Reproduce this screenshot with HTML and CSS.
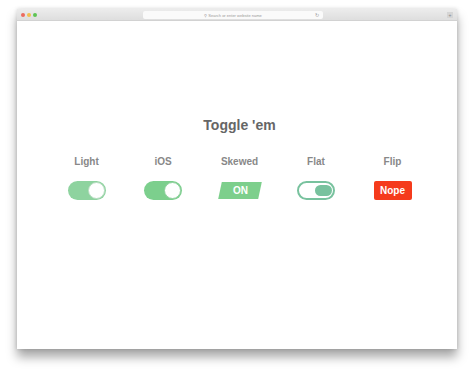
FILE: index.html
```html
<!DOCTYPE html>
<html lang="en">
<head>
<meta charset="utf-8">
<title>Toggle 'em</title>
<link rel="stylesheet" href="styles.css">
</head>
<body>
<div class="window">
	<div class="toolbar">
		<div class="dots">
			<span class="dot red"></span>
			<span class="dot yellow"></span>
			<span class="dot green"></span>
		</div>
		<div class="address">
			<span class="search">&#9906; Search or enter website name</span>
			<span class="reload">&#8635;</span>
		</div>
		<span class="plus">+</span>
	</div>
	<div class="page">
		<h1 class="title">Toggle 'em</h1>
		<ul class="toggles">
			<li>
				<span class="label">Light</span>
				<span class="tgl tgl_light"><i></i></span>
			</li>
			<li>
				<span class="label">iOS</span>
				<span class="tgl tgl_ios"><i></i></span>
			</li>
			<li>
				<span class="label">Skewed</span>
				<span class="tgl tgl_skew"><b>ON</b></span>
			</li>
			<li>
				<span class="label">Flat</span>
				<span class="tgl tgl_flat"><i></i></span>
			</li>
			<li>
				<span class="label">Flip</span>
				<span class="tgl tgl_flip">Nope</span>
			</li>
		</ul>
	</div>
</div>
</body>
</html>
```
FILE: styles.css
```css
* {margin:0; padding:0; box-sizing:border-box}
li {list-style:none}
html, body {height:100%}
body {
	background:#fff;
	font-family:"Liberation Sans", Arial, sans-serif;
	padding:9px 17px 0 17px;
}

.window {
	width:440px;
	height:340px;
	background:#fff;
	box-shadow:0 8px 10px rgba(0,0,0,0.35), 0 0 4px rgba(0,0,0,0.15);
	display:flex;
	flex-direction:column;
}
.toolbar {
	height:12px;
	background:linear-gradient(#ececec, #dedede);
	border-bottom:1px solid #d2d2d2;
	display:flex;
	align-items:center;
	padding:0 4px;
	position:relative;
}
.dots {display:flex; gap:2px}
.dot {width:4px; height:4px; border-radius:50%}
.dot.red {background:#ec6b5f}
.dot.yellow {background:#f3c04f}
.dot.green {background:#5fc454}
.address {
	position:absolute;
	left:126px;
	width:180px;
	top:2px;
	height:8px;
	background:#fafafa;
	border-radius:2px;
	font-size:4px;
	color:#999;
	display:flex;
	align-items:center;
	justify-content:center;
}
.reload {position:absolute; right:4px; font-size:5px}
.plus {
	margin-left:auto;
	width:6px; height:6px;
	background:#d5d5d5;
	font-size:5px; line-height:6px;
	text-align:center;
	color:#888;
}

.page {
	flex:1;
	padding-top:95px;
	padding-left:5px;
	text-align:center;
}
.title {
	font-size:14px;
	font-weight:bold;
	color:#666;
	line-height:18px;
}
.toggles {
	display:flex;
	justify-content:center;
	margin-top:22px;
}
.toggles li {
	width:76.5px;
	display:flex;
	flex-direction:column;
	align-items:center;
}
.label {
	font-size:10px;
	font-weight:bold;
	color:#888;
	line-height:12px;
}
.tgl {
	margin-top:13px;
	width:38px;
	height:19px;
	display:flex;
	align-items:center;
	position:relative;
}
.tgl_light {
	background:#8ed39f;
	border-radius:10px;
	padding:1px;
	justify-content:flex-end;
}
.tgl_light i {
	width:17px; height:17px;
	border-radius:50%;
	background:#fff;
	border:1px solid #b7dcc1;
}
.tgl_ios {
	background:#7ccf8d;
	border-radius:10px;
	padding:1px;
	justify-content:flex-end;
}
.tgl_ios i {
	width:17px; height:17px;
	border-radius:50%;
	background:#fff;
	border:1px solid #8fd09e;
}
.tgl_skew {
	width:40px;
	height:17px;
	margin-top:14px;
	margin-bottom:1px;
	background:#7dcf8c;
	transform:skew(-12deg);
	justify-content:center;
}
.tgl_skew b {
	transform:skew(12deg);
	color:#fff;
	font-size:10px;
}
.tgl_flat {
	border:2px solid #78c29e;
	border-radius:10px;
	background:#fff;
	padding:1px;
	justify-content:flex-end;
}
.tgl_flat i {
	width:17px; height:11px;
	border-radius:6px;
	background:#78c29e;
}
.tgl_flip {
	background:#f53b1c;
	border-radius:2px;
	color:#fff;
	font-size:10px;
	font-weight:bold;
	justify-content:center;
}
```
